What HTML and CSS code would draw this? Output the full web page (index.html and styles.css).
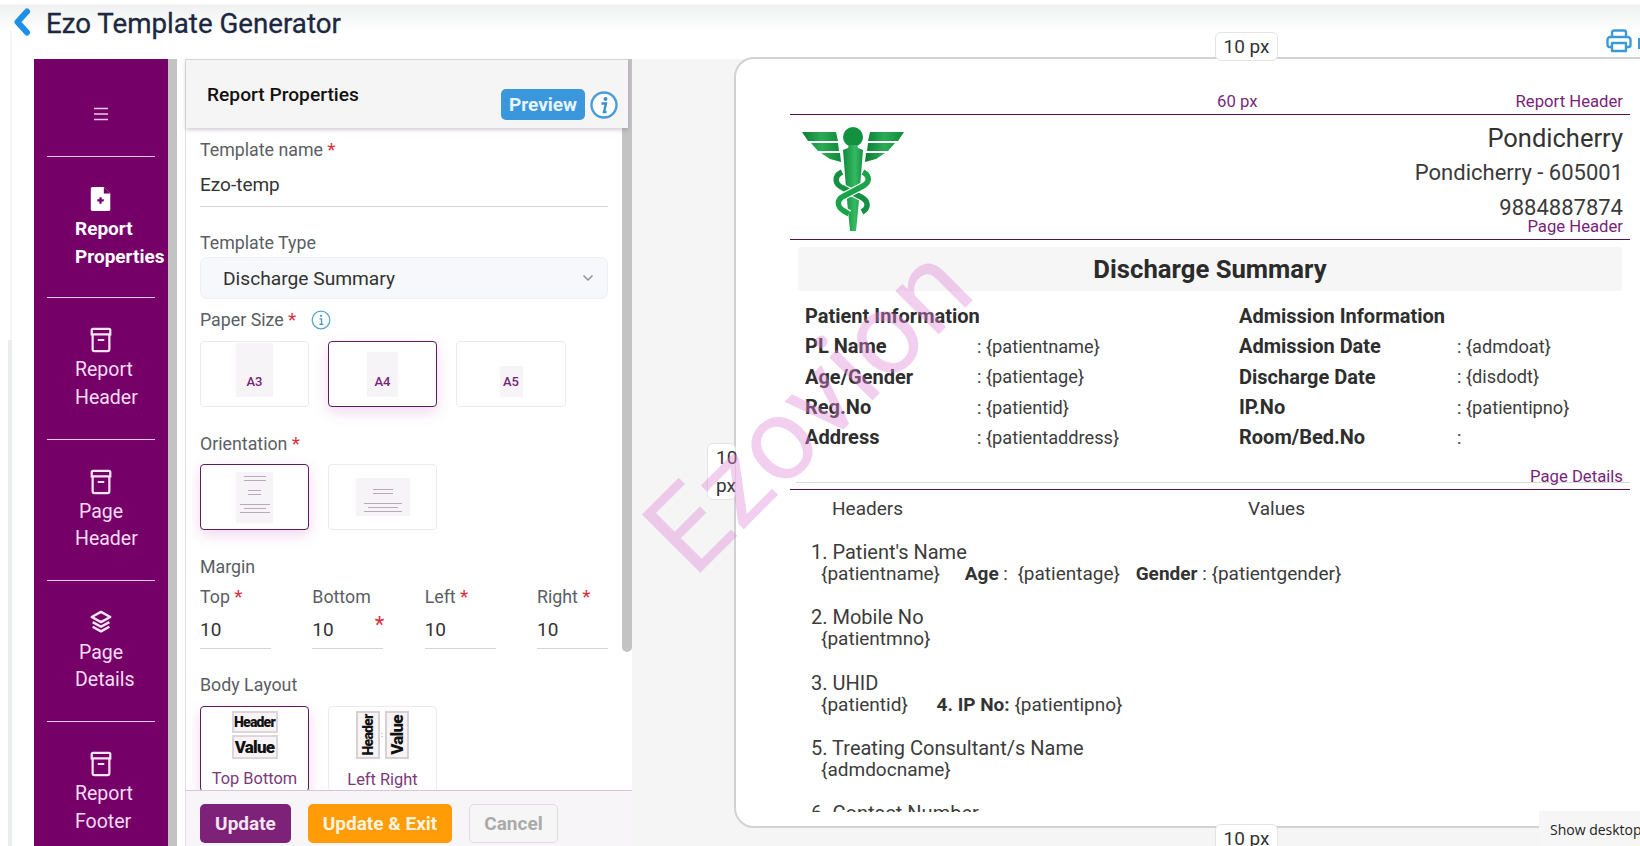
FILE: index.html
```html
<!DOCTYPE html>
<html lang="en">
<head>
<meta charset="utf-8">
<title>Ezo Template Generator</title>
<link rel="stylesheet" href="styles.css">
</head>
<body>
<div class="app">
  <header class="topbar">
    <svg class="back" viewBox="0 0 18 28"><path d="M14 3.500 4.500 14l9.500 10.500" fill="none" stroke="#1e8fe6" stroke-width="6" stroke-linecap="round" stroke-linejoin="round"/></svg>
    <h1>Ezo Template Generator</h1>
  </header>
  <div class="workspace">
    <nav class="rail">
      <div class="rail-top">
        <svg class="burger" viewBox="0 0 16 14"><path d="M1 1.500h14M1 7h14M1 12.500h14" stroke="#f3c6ec" stroke-width="1.400"/></svg>
      </div>
      <a class="rail-item active">
        <svg class="rail-icon" viewBox="0 0 24 28"><path d="M3 1h12l7 7v17a2 2 0 0 1-2 2H3a2 2 0 0 1-2-2V3a2 2 0 0 1 2-2z" fill="#fff"/><path d="M15 1v7h7" fill="#750068"/><path d="M11.500 12v7M8 15.500h7" stroke="#750068" stroke-width="2.400"/></svg>
        <span>Report</span><span>Properties</span>
      </a>
      <a class="rail-item">
        <svg class="rail-icon" viewBox="0 0 24 28"><path d="M3.500 2h17a1.500 1.500 0 0 1 1.500 1.500V8H2V3.500A1.500 1.500 0 0 1 3.500 2zM3 8v16a2 2 0 0 0 2 2h14a2 2 0 0 0 2-2V8M8.500 14h7" fill="none" stroke="#fbe6f8" stroke-width="2.400"/></svg>
        <span>Report</span><span>Header</span>
      </a>
      <a class="rail-item">
        <svg class="rail-icon" viewBox="0 0 24 28"><path d="M3.500 2h17a1.500 1.500 0 0 1 1.500 1.500V8H2V3.500A1.500 1.500 0 0 1 3.500 2zM3 8v16a2 2 0 0 0 2 2h14a2 2 0 0 0 2-2V8M8.500 14h7" fill="none" stroke="#fbe6f8" stroke-width="2.400"/></svg>
        <span class="indent">Page</span><span>Header</span>
      </a>
      <a class="rail-item">
        <svg class="rail-icon" viewBox="0 0 24 28"><path d="M12 2 22 7.500 12 13 2 7.500zM3 13l9 5 9-5M3 18l9 5 9-5" fill="none" stroke="#fbe6f8" stroke-width="2.600" stroke-linejoin="round"/></svg>
        <span class="indent">Page</span><span>Details</span>
      </a>
      <a class="rail-item">
        <svg class="rail-icon" viewBox="0 0 24 28"><path d="M3.500 2h17a1.500 1.500 0 0 1 1.500 1.500V8H2V3.500A1.500 1.500 0 0 1 3.500 2zM3 8v16a2 2 0 0 0 2 2h14a2 2 0 0 0 2-2V8M8.500 14h7" fill="none" stroke="#fbe6f8" stroke-width="2.400"/></svg>
        <span>Report</span><span>Footer</span>
      </a>
    </nav>
    <div class="gutter"></div>
    <section class="panel">
      <div class="panel-head">
        <h2>Report Properties</h2>
        <div class="head-actions">
          <button class="btn-preview">Preview</button>
          <svg class="info-lg" viewBox="0 0 28 28"><circle cx="14" cy="14" r="12.500" fill="#fff" stroke="#4a9bd8" stroke-width="2.400"/><circle cx="15.500" cy="8" r="2" fill="#3a8fd0"/><path d="M11.500 12.500h4.500l-2 8.500h2.500" fill="none" stroke="#3a8fd0" stroke-width="2.400"/></svg>
        </div>
      </div>
      <div class="panel-body">
        <label class="field-label first">Template name <i>*</i></label>
        <div class="input wide">Ezo-temp</div>
        <label class="field-label gap-md">Template Type</label>
        <div class="select">Discharge Summary
          <svg class="caret" viewBox="0 0 12 8"><path d="M1.500 1.500 6 6l4.500-4.500" fill="none" stroke="#8a94a3" stroke-width="1.500"/></svg>
        </div>
        <label class="field-label gap-sm">Paper Size <i>*</i>
          <svg class="info-sm" viewBox="0 0 20 20"><circle cx="10" cy="10" r="8.800" fill="none" stroke="#5ba6cf" stroke-width="1.300"/><circle cx="10" cy="5.800" r="1.100" fill="#4a95c0"/><path d="M8.500 8.800H10.500V14M8.500 14.300h4" fill="none" stroke="#4a95c0" stroke-width="1.300"/></svg>
        </label>
        <div class="cards">
          <div class="card paper"><div class="sheet a3">A3</div></div>
          <div class="card paper selected"><div class="sheet a4">A4</div></div>
          <div class="card paper wider"><div class="sheet a5">A5</div></div>
        </div>
        <label class="field-label gap-lg">Orientation <i>*</i></label>
        <div class="cards tight">
          <div class="card orient selected">
            <div class="sheet portrait">
              <b class="l22"></b><b class="l22"></b><b class="l12 sp"></b><b class="l12"></b><b class="l30 sp"></b><b class="l22"></b><b class="l30"></b>
            </div>
          </div>
          <div class="card orient">
            <div class="sheet landscape">
              <b class="l20"></b><b class="l20"></b><b class="l38 sp"></b><b class="l30"></b><b class="l38"></b>
            </div>
          </div>
        </div>
        <label class="field-label gap-lg">Margin</label>
        <div class="margins">
          <div class="margin-col"><label class="field-label">Top <i>*</i></label><div class="input num">10</div></div>
          <div class="margin-col"><label class="field-label">Bottom</label><div class="input num with-star">10<i>*</i></div></div>
          <div class="margin-col"><label class="field-label">Left <i>*</i></label><div class="input num">10</div></div>
          <div class="margin-col"><label class="field-label">Right <i>*</i></label><div class="input num">10</div></div>
        </div>
        <label class="field-label gap-md">Body Layout</label>
        <div class="cards">
          <div class="card layout selected">
            <div class="stack">
              <span class="mini header-mini">Header</span>
              <span class="mini value-mini">Value</span>
            </div>
            <span class="layout-name">Top Bottom</span>
          </div>
          <div class="card layout">
            <div class="side">
              <span class="mini-v"><em>Header</em></span>
              <span class="mini-colon">:</span>
              <span class="mini-v"><em class="big">Value</em></span>
            </div>
            <span class="layout-name">Left Right</span>
          </div>
        </div>
      </div>
      <div class="thumb"></div>
      <div class="panel-foot">
        <button class="btn btn-update">Update</button>
        <button class="btn btn-exit">Update &amp; Exit</button>
        <button class="btn btn-cancel">Cancel</button>
      </div>
    </section>
    <main class="preview">
      <article class="page">
        <span class="px-tag px-top">10 px</span>
        <span class="px-tag px-left">10 px</span>
        <span class="px-tag px-bottom">10 px</span>
        <div class="band">
          <span class="band-size">60 px</span>
          <span class="band-name">Report Header</span>
        </div>
        <div class="letterhead">
          <svg class="logo" viewBox="0 0 104 106">
            <defs>
              <linearGradient id="wing" x1="0" x2="1" y1="0" y2="0"><stop offset="0" stop-color="#0b7d33"/><stop offset=".5" stop-color="#2cab56"/><stop offset="1" stop-color="#0e8a3a"/></linearGradient>
              <linearGradient id="staff" x1="0" x2="1" y1="0" y2="0"><stop offset="0" stop-color="#0f8a3b"/><stop offset=".6" stop-color="#35ba62"/><stop offset="1" stop-color="#178f42"/></linearGradient>
            </defs>
            <path d="M1 6h34l2 9H7zM10 17h27l1 8H17zM20 27h19l1 9-11-3z" fill="url(#wing)"/>
            <path d="M103 6H69l-2 9h30zM94 17H67l-1 8h21zM84 27H65l-1 9 11-3z" fill="url(#wing)"/>
            <circle cx="52" cy="11" r="10" fill="#12913f"/>
            <path d="M48 19h8l1 3 5 2-4 50-3 31h-6l-3-31-4-50 5-2z" fill="url(#staff)"/>
            <path d="M41 46c-8 4-8 12 1 16l18 9c8 4 8 11 1 15" fill="none" stroke="#fff" stroke-width="8"/>
            <path d="M41 46c-8 4-8 12 1 16l18 9c8 4 8 11 1 15" fill="none" stroke="#149140" stroke-width="5.500"/>
            <path d="M62 46c7 4 7 10 0 14L43 70c-8 4-7 11 0 15l5 3" fill="none" stroke="#fff" stroke-width="8"/>
            <path d="M62 46c7 4 7 10 0 14L43 70c-8 4-7 11 0 15l5 3" fill="none" stroke="#1ba34c" stroke-width="5.500"/>
          </svg>
          <div class="org">
            <div class="org-name">Pondicherry</div>
            <div class="org-line">Pondicherry - 605001</div>
            <div class="org-line">9884887874</div>
            <div class="band-name tucked">Page Header</div>
          </div>
        </div>
        <h3 class="doc-title">Discharge Summary</h3>
        <div class="info">
          <dl class="info-col left">
            <dt class="head">Patient Information</dt><dd class="head"></dd>
            <dt>PL Name</dt><dd>: {patientname}</dd>
            <dt>Age/Gender</dt><dd>: {patientage}</dd>
            <dt>Reg.No</dt><dd>: {patientid}</dd>
            <dt>Address</dt><dd>: {patientaddress}</dd>
          </dl>
          <dl class="info-col right">
            <dt class="head">Admission Information</dt><dd class="head"></dd>
            <dt>Admission Date</dt><dd>: {admdoat}</dd>
            <dt>Discharge Date</dt><dd>: {disdodt}</dd>
            <dt>IP.No</dt><dd>: {patientipno}</dd>
            <dt>Room/Bed.No</dt><dd>:</dd>
          </dl>
        </div>
        <div class="details-band"><span class="band-name">Page Details</span></div>
        <div class="details">
          <div class="cols"><span>Headers</span><span>Values</span></div>
          <div class="item"><p>1. Patient's Name</p><p class="val">{patientname} <b class="a age">Age</b> :&nbsp; {patientage} <b class="a gender">Gender</b> : {patientgender}</p></div>
          <div class="item"><p>2. Mobile No</p><p class="val">{patientmno}</p></div>
          <div class="item"><p>3. UHID</p><p class="val">{patientid} <b class="a ip">4. IP No:</b> {patientipno}</p></div>
          <div class="item"><p>5. Treating Consultant/s Name</p><p class="val">{admdocname}</p></div>
          <div class="item"><p>6. Contact Number</p></div>
        </div>
      </article>
    </main>
  </div>
  <div class="watermark">Ezovion</div>
  <svg class="printer" viewBox="0 0 26 24"><path d="M6 8V3.500A2 2 0 0 1 8 1.500h10a2 2 0 0 1 2 2V8M6 18H3.500A2 2 0 0 1 1.500 16v-5a3 3 0 0 1 3-3h17a3 3 0 0 1 3 3v5a2 2 0 0 1-2 2H20M6 14h14v8H6z" fill="none" stroke="#3b9ad6" stroke-width="2.400" stroke-linejoin="round"/></svg>
  <span class="printer-next"></span>
  <div class="tooltip">Show desktop</div>
</div>
</body>
</html>
```
FILE: styles.css
```css
* { box-sizing: border-box; }
html, body { margin: 0; padding: 0; height: 100%; }
body { font-family: Roboto, "Liberation Sans", sans-serif; background: #fff; color: #333; overflow: hidden; }
.app { position: relative; width: 1640px; height: 846px; overflow: hidden; background: #fff; }
.app::before { content: ""; position: absolute; left: 8px; top: 340px; width: 4px; height: 506px; background: #eceded; }
.app::after { content: ""; position: absolute; left: 10px; top: 30px; width: 2px; height: 310px; background: #f5f5f5; }

.topbar { height: 59px; display: flex; align-items: flex-start; padding: 8px 0 0 13px; gap: 15px;
  background: linear-gradient(#fff 0, #fff 4px, #f0f1f2 5px, #fff 32px); }
.back { width: 18px; height: 28px; flex: none; }
.topbar h1 { margin: -1px 0 0; font-size: 27.700px; line-height: 34px; font-weight: 400; color: #1c2740; -webkit-text-stroke: .3px #1c2740; }

.workspace { display: flex; height: 787px; padding-left: 34px; }

.rail { width: 134px; flex: none; background: #750068; color: #f9dcf5; padding: 0 13px; }
.rail-top { height: 98px; display: flex; align-items: flex-end; justify-content: center; border-bottom: 1px solid #f0c6ea; padding-bottom: 35px; }
.burger { width: 16px; height: 14px; }
.rail-item { display: flex; flex-direction: column; height: 141.300px; padding: 29px 0 0 28px; border-bottom: 1px solid #f0c6ea; font-size: 19.500px; line-height: 27.500px; white-space: nowrap; }
.rail-item:last-child { border-bottom: 0; }
.rail-item.active { color: #fff; font-weight: 700; font-size: 19px; }
.rail-item .indent { padding-left: 4px; }
.rail-icon { width: 24px; height: 26px; margin: 0 0 3px 14px; flex: none; }

.gutter { width: 9px; flex: none; background: #c3c3c4; }

.panel { position: relative; width: 447px; margin-left: 8px; flex: none; display: flex; flex-direction: column; background: #fff; border-left: 1px solid #e0e0e0; }
.panel-head { height: 69px; width: 442px; flex: none; display: flex; background: #f6f5f5; border-top: 1px solid #d8d8d8; padding: 0 10px 0 21px; box-shadow: 0 2px 4px rgba(120,80,110,.3); position: relative; z-index: 1; }
.panel-head h2 { margin: 24px 0 0; font-size: 19.200px; line-height: 22px; font-weight: 500; color: #111; }
.head-actions { margin: 29px 0 0 auto; display: flex; gap: 5px; align-items: flex-start; }
.btn-preview { width: 84px; height: 31px; border: 0; border-radius: 5px; background: #3a97db; color: #e8f5ff; font: 700 19px/29px Roboto, sans-serif; padding: 0; }
.info-lg { width: 28px; height: 28px; margin-top: 2px; }

.panel-body { flex: 1; min-height: 0; overflow: hidden; padding: 0 20px 0 14px; width: 442px; }
.field-label { display: block; font-size: 17.800px; line-height: 22px; color: #5a5e64; }
.field-label i { color: #d8313d; font-style: normal; font-size: 19px; line-height: 10px; }
.first { margin-top: 11px; }
.gap-lg { margin-top: 26px; }
.gap-md { margin-top: 25px; }
.gap-sm { margin-top: 10px; }
.input { border-bottom: 1px solid #d4d4d6; font-size: 19px; line-height: 22px; color: #333; }
.wide { height: 46px; padding-top: 13px; }
.select { position: relative; height: 42px; margin-top: 3px; background: #f7f8fb; border: 1px solid #eef0f4; border-radius: 7px; padding-left: 22px; font-size: 19.200px; line-height: 41px; color: #333; }
.caret { position: absolute; right: 13px; top: 16px; width: 12px; height: 8px; }
.info-sm { width: 20px; height: 20px; margin-left: 10px; vertical-align: -4px; }

.cards { display: flex; gap: 19px; margin-top: 10px; }
.cards.tight { margin-top: 9px; }
.card { width: 109px; height: 66px; background: #fff; border: 1px solid #eceaec; border-radius: 4px; display: flex; justify-content: center; align-items: flex-end; flex: none; }
.card.wider { width: 110px; }
.card.selected { border: 1.500px solid #5c1c5e; box-shadow: 0 5px 14px rgba(190,90,180,.24); }
.sheet { background: #f7f4f7; color: #76247a; font-size: 13px; font-weight: 500; text-align: center; }
.paper { padding-bottom: 9px; }
.paper .sheet { display: flex; align-items: flex-end; justify-content: center; padding-bottom: 8px; line-height: 15px; }
.a3 { width: 37px; height: 54px; }
.a4 { width: 31px; height: 45px; }
.a5 { width: 23px; height: 31px; }
.orient { align-items: center; }
.sheet b { display: block; height: 1px; background: #baa9ba; margin: 3px auto 0; }
.sheet b.sp { margin-top: 9px; }
.portrait { width: 37px; height: 51px; padding-top: 1px; }
.landscape { width: 54px; height: 38px; padding-top: 8px; }
.l12 { width: 13px; } .l20 { width: 20px; } .l22 { width: 22px; } .l30 { width: 30px; } .l38 { width: 38px; }

.margins { display: flex; justify-content: space-between; margin-top: 8px; }
.margin-col { width: 71px; }
.num { height: 41px; padding-top: 11px; position: relative; }
.with-star i { position: absolute; right: -1px; top: 6px; color: #d8313d; font-style: normal; font-size: 22px; }

.layout { height: 86px; flex-direction: column; align-items: center; justify-content: flex-start; }
.stack { display: flex; flex-direction: column; gap: 2px; margin-top: 4px; }
.mini { display: block; width: 46px; border: 2px solid #ddd5da; background: #f8f4f6; color: #111; font: 900 14px/18px Roboto, sans-serif; letter-spacing: -.8px; text-align: center; overflow: hidden; }
.header-mini { height: 22px; }
.value-mini { height: 24px; font-size: 17px; line-height: 20px; }
.side { display: flex; align-items: center; gap: 1px; margin-top: 3px; height: 50px; }
.mini-v { width: 24px; height: 48px; border: 2px solid #d8d0d5; background: #f8f4f6; display: flex; align-items: center; justify-content: center; }
.mini-v em { font: 900 14px/18px Roboto, sans-serif; letter-spacing: -.8px; color: #111; transform: rotate(-90deg); white-space: nowrap; font-style: normal; }
.mini-v em.big { font-size: 17px; }
.mini-colon { font-size: 7px; color: #333; width: 3px; }
.layout-name { margin-top: 10px; font-size: 16.400px; line-height: 20px; color: #7a3a7a; }

.thumb { position: absolute; left: 436px; top: 0; width: 10px; height: 593px; background: #c3c3c4; border-radius: 0 0 5px 5px; z-index: 0; }

.panel-foot { height: 56px; flex: none; width: 446px; display: flex; gap: 17px; padding: 13px 0 0 14px; background: #f8f5f8; border-top: 1px solid #dcc3da; position: relative; z-index: 1; }
.btn { height: 39px; border: 0; border-radius: 5px; font: 700 19px/37px Roboto, sans-serif; padding: 0; }
.btn-update { width: 91px; background: #7d2179; color: #f3e4f2; }
.btn-exit { width: 144px; background: #ff9c08; color: #fff3df; }
.btn-cancel { width: 89px; background: #f7f6f7; border: 1px solid #ddd; color: #aaa; }

.preview { flex: 1; min-width: 0; background: #f5f5f5; padding-left: 102px; }
.page { position: relative; width: 960px; height: 771px; margin-top: -2px; background: #fff; border: 2px solid #d2d2d2; border-radius: 20px; padding: 0 0 14px 54px; display: flex; flex-direction: column; }
.px-tag { position: absolute; background: #fff; border: 1px solid #e4e4e4; border-radius: 6px; font-size: 19px; line-height: 27px; color: #333; text-align: center; z-index: 1; }
.px-top { left: 479px; top: -27px; width: 63px; height: 29px; }
.px-left { left: -29px; top: 384px; width: 29px; height: 57px; padding-left: 8px; text-align: left; line-height: 28px; overflow: visible; }
.px-bottom { left: 479px; top: 765px; width: 63px; height: 29px; }

.band { flex: none; width: 840px; height: 56px; display: flex; align-items: flex-end; justify-content: space-between; padding: 0 7px 3px 0; border-bottom: 1.500px solid #4d1450; }
.band-size { margin-left: 427px; font-size: 16.700px; line-height: 19px; color: #7a2a78; }
.band-name { font-size: 16.700px; line-height: 19px; color: #7a1f78; }
.letterhead { flex: none; width: 840px; height: 125px; display: flex; justify-content: space-between; border-bottom: 1.500px solid #4d1450; padding: 11px 7px 0 11px; }
.logo { width: 104px; height: 106px; flex: none; }
.org { text-align: right; margin-top: -5px; }
.org-name { font-size: 25.500px; line-height: 34px; color: #333; }
.org-line { font-size: 22px; line-height: 35px; color: #3a3a3a; }
.tucked { margin-top: -8px; }
.doc-title { flex: none; width: 824px; height: 44px; margin: 7px 0 0 8px; background: #f6f6f6; border-radius: 3px; text-align: center; font-size: 25.700px; line-height: 45px; font-weight: 700; color: #2b2b2b; }

.info { flex: none; width: 834px; margin-left: 6px; padding: 10px 0 30px 9px; display: flex; border-bottom: 1px solid #d7dadb; }
.info-col { margin: 0; display: grid; grid-auto-rows: 30.300px; align-items: center; }
.info-col.left { width: 434px; grid-template-columns: 172px 1fr; }
.info-col.right { grid-template-columns: 218px 1fr; }
.info-col dt { font-size: 20px; font-weight: 700; color: #2e2e2e; white-space: nowrap; }
.info-col dd { margin: 0; font-size: 18.200px; color: #3c3c3c; white-space: nowrap; }
.details-band { flex: none; width: 840px; height: 23px; margin-top: -16px; padding-right: 7px; text-align: right; border-bottom: 1.500px solid #4d1450; position: relative; }

.details { flex: 1; min-height: 0; overflow: hidden; width: 840px; }
.cols { display: grid; grid-template-columns: 416px 1fr; padding: 8px 0 0 42px; font-size: 19px; line-height: 22px; color: #3c3c3c; }
.item { padding-left: 21px; margin-bottom: 23.300px; font-size: 20px; line-height: 21px; color: #3c3c3c; }
.cols + .item { margin-top: 21.500px; }
.item p { margin: 0; }
.item .val { padding-left: 10px; font-size: 19px; white-space: normal; }
.item .a { font-weight: 700; color: #333; }
.item .age { margin-left: 20px; }
.item .gender { margin-left: 11px; }
.item .ip { margin-left: 24px; }

.watermark { position: absolute; left: 676px; top: 437px; font-size: 116px; line-height: 120px; font-weight: 400; color: rgba(225,135,215,.4); transform: rotate(-45deg); transform-origin: 60px 100px; white-space: nowrap; z-index: 5; pointer-events: none; }

.printer { position: absolute; left: 1606px; top: 29px; width: 26px; height: 24px; }
.printer-next { position: absolute; left: 1638px; top: 38px; width: 2px; height: 11px; background: #3b9ad6; }
.tooltip { position: absolute; left: 1539px; top: 811px; width: 101px; height: 35px; background: #f6f6f6; padding: 9px 0 0 11px; font: 14px/20px "Open Sans", sans-serif; color: #222; white-space: nowrap; overflow: hidden; z-index: 6; }
```
